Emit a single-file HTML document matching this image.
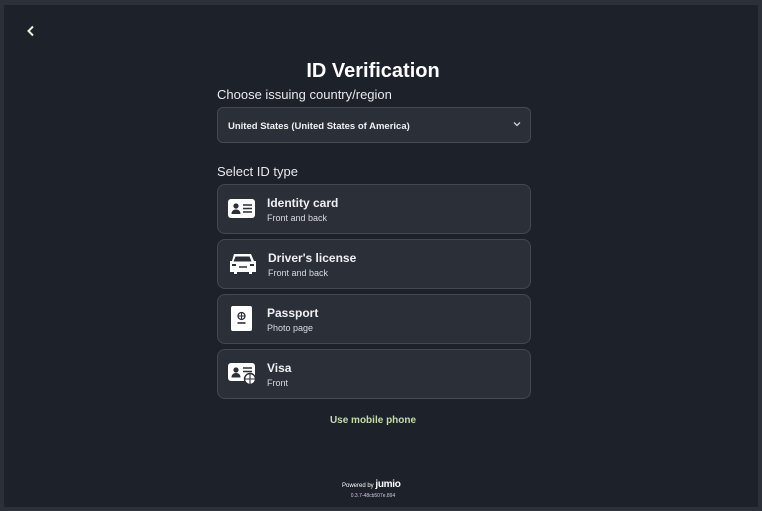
<!DOCTYPE html>
<html><head><style>
*{margin:0;padding:0;box-sizing:border-box}
body{width:762px;height:511px;background:#2b3039;font-family:"Liberation Sans",sans-serif;overflow:hidden;position:relative}
.in{position:absolute;left:4px;top:5px;right:4px;bottom:4px;background:#1d212a}
.abs{position:absolute}
.card{position:absolute;left:217px;width:314px;height:50px;background:#2a2f38;border:1px solid #434851;border-radius:8px}
.t{position:absolute;left:49px;top:11px;color:#f0f0f2;font-weight:bold;font-size:12px}
.s{position:absolute;left:49px;top:28px;color:#d8dae0;font-size:9px}
.ic{position:absolute;left:10px;top:11px}
</style></head><body>
<div class="in"></div>
<svg class="abs" style="left:26px;top:25px" width="10" height="12" viewBox="0 0 10 12"><path d="M7 1.5L2.5 6L7 10.5" stroke="#e8f0d8" stroke-width="2" fill="none"/></svg>
<div class="abs" style="left:0;width:746px;top:60px;text-align:center;color:#fff;font-size:20px;font-weight:bold">ID Verification</div>
<div class="abs" style="left:217px;top:87px;color:#e6e8ec;font-size:13px">Choose issuing country/region</div>
<div class="abs" style="left:217px;top:107px;width:314px;height:36px;background:#2a2f38;border:1px solid #434851;border-radius:6px"></div>
<div class="abs" style="left:228px;top:121px;color:#f0f0f2;font-size:9.5px;font-weight:bold">United States (United States of America)</div>
<svg class="abs" style="left:513px;top:121px" width="8" height="6" viewBox="0 0 8 6"><path d="M1 1.5L4 4.5L7 1.5" stroke="#d0d2d8" stroke-width="1.3" fill="none"/></svg>
<div class="abs" style="left:217px;top:164px;color:#e6e8ec;font-size:13px">Select ID type</div>

<div class="card" style="top:184px">
<svg class="ic" style="top:14px" width="28" height="20" viewBox="0 0 28 20"><rect x="0" y="0" width="27" height="19" rx="3" fill="#fff"/><circle cx="8" cy="7" r="2.6" fill="#2a2f38"/><path d="M3.5 15c0-3 2-4.5 4.5-4.5s4.5 1.5 4.5 4.5z" fill="#2a2f38"/><path d="M15 6h9M15 9.5h9M15 13h9" stroke="#2a2f38" stroke-width="1.6"/></svg>
<div class="t">Identity card</div><div class="s">Front and back</div></div>

<div class="card" style="top:239px">
<svg class="ic" style="top:12px" width="30" height="24" viewBox="0 0 30 24"><path d="M6 2h17l3 7h2v11h-4v2h-3v-2H9v2H6v-2H2V9h2z" fill="#fff"/><path d="M7.5 4.5h14l2 5h-18z" fill="#2a2f38"/><rect x="4" y="12" width="4" height="2" fill="#2a2f38"/><rect x="22" y="12" width="4" height="2" fill="#2a2f38"/><path d="M11 15h8" stroke="#2a2f38" stroke-width="1.5"/></svg>
<div class="t" style="left:50px">Driver's license</div><div class="s" style="left:50px">Front and back</div></div>

<div class="card" style="top:294px">
<svg class="ic" style="left:13px;top:11px" width="22" height="26" viewBox="0 0 22 26"><rect x="0" y="0" width="21" height="25" rx="2" fill="#fff"/><circle cx="10.5" cy="10" r="3.5" stroke="#2a2f38" stroke-width="1.3" fill="none"/><path d="M7 10h7M10.5 6.5v7" stroke="#2a2f38" stroke-width="1"/><path d="M6.5 17h8" stroke="#2a2f38" stroke-width="1.6"/></svg>
<div class="t">Passport</div><div class="s">Photo page</div></div>

<div class="card" style="top:349px">
<svg class="ic" style="top:12px" width="30" height="24" viewBox="0 0 30 24"><rect x="0" y="1" width="27" height="18" rx="3" fill="#fff"/><circle cx="8" cy="8" r="2.6" fill="#2a2f38"/><path d="M3.5 15.5c0-3 2-4.5 4.5-4.5s4.5 1.5 4.5 4.5z" fill="#2a2f38"/><path d="M15 6h9M15 9.5h9" stroke="#2a2f38" stroke-width="1.5"/><circle cx="22" cy="17" r="5.5" fill="#fff" stroke="#2a2f38" stroke-width="1.4"/><path d="M17 17h10M22 12v10" stroke="#2a2f38" stroke-width="1.1"/></svg>
<div class="t">Visa</div><div class="s">Front</div></div>

<div class="abs" style="left:0;width:746px;top:415px;text-align:center;color:#c6dca8;font-size:10px;font-weight:bold">Use mobile phone</div>
<div class="abs" style="left:342px;top:479px;color:#fff;font-size:6px">Powered by <b style="font-size:10px;letter-spacing:-0.3px">jumio</b></div>
<div class="abs" style="left:0;width:746px;top:493px;text-align:center;color:#ccd;font-size:5px">0.3.7-48cb507e.894</div>
</body></html>
